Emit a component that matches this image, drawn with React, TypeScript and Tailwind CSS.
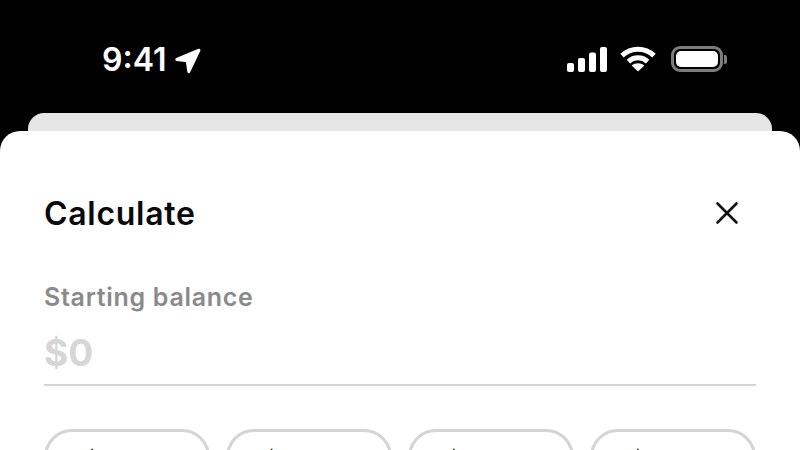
const sans = "font-['Inter','Liberation_Sans',sans-serif]";

function StatusBar() {
  return (
    <div className="flex h-[113px] shrink-0 items-start justify-between pl-[102px] pr-[73px] pt-[41px]">
      <div className="flex items-center gap-[8px]">
        <span className="text-[32px] font-semibold leading-[38px] text-white">9:41</span>
        <svg width="26" height="26" viewBox="0 0 26 26" className="mt-[1px]">
          <path d="M24 2.2 13.8 23.6 12.2 12.8 1.8 11.4 24 2.2Z" fill="#fff" stroke="#fff" strokeWidth="3" strokeLinejoin="round" />
        </svg>
      </div>
      <div className="mt-[5px] flex items-center">
        <svg width="40" height="25" viewBox="0 0 40 25" fill="#fff">
          <rect x="0" y="16" width="7" height="9" rx="2" />
          <rect x="11" y="11" width="7" height="14" rx="2" />
          <rect x="22" y="5.5" width="7" height="19.5" rx="2" />
          <rect x="33" y="0" width="7" height="25" rx="2" />
        </svg>
        <svg width="36" height="26" viewBox="0 0 36 26" fill="none" stroke="#fff" strokeWidth="5" className="ml-[13px]">
          <path d="M2 9.6C11 1 25 1 34 9.6" />
          <path d="M8.4 15.6c5.4-5 13.8-5 19.2 0" />
          <path d="M18 25.5 11.6 19.6c3.6-3.1 9.2-3.1 12.8 0L18 25.5Z" fill="#fff" stroke="none" />
        </svg>
        <div className="ml-[15px] flex items-center gap-[1px]">
          <div className="flex h-[26px] w-[52px] rounded-[9px] border-[3px] border-[#7d7d7d] p-[2px]">
            <div className="flex-1 rounded-[5px] bg-white" />
          </div>
          <div className="h-[9px] w-[3px] rounded-r-[2px] bg-[#7d7d7d]" />
        </div>
      </div>
    </div>
  );
}

export default function App() {
  const chips = ["$1,000", "$2,500", "$5,000", "$7,500"];

  return (
    <div className={`flex h-[450px] w-[800px] flex-col overflow-hidden bg-black ${sans}`}>
      <StatusBar />
      <div className="mx-[28px] h-[30px] shrink-0 rounded-t-[16px] bg-[#e6e6e6]" />
      <div className="-mt-[12px] flex flex-1 flex-col rounded-t-[20px] bg-white px-[44px] pt-[64px]">
        <div className="flex items-center justify-between">
          <h1 className="text-[32px] font-semibold leading-[38px] tracking-[0.7px] text-[#0a0a0a]">Calculate</h1>
          <svg width="24" height="24" viewBox="0 0 24 24" fill="none" stroke="#111" strokeWidth="2.6" strokeLinecap="round" className="mb-[2px] mr-[17px]">
            <path d="M2.5 2.5 21.5 21.5M21.5 2.5 2.5 21.5" />
          </svg>
        </div>
        <p className="mt-[49px] text-[25px] font-semibold leading-[30px] tracking-[0.7px] text-[#8a8a8a]">Starting balance</p>
        <div className="mt-[20px] h-[54px] border-b-2 border-[#d4d4d4] text-[37px] font-bold leading-[42px] text-[#d6d6d6]">$0</div>
        <div className="mt-[43px] grid grid-cols-4 gap-4">
          {chips.map((c) => (
            <div key={c} className="flex h-[62px] items-center justify-center rounded-[28px] border-[3px] border-[#d4d4d4] text-[26px] font-semibold text-[#111]">
              {c}
            </div>
          ))}
        </div>
      </div>
    </div>
  );
}
